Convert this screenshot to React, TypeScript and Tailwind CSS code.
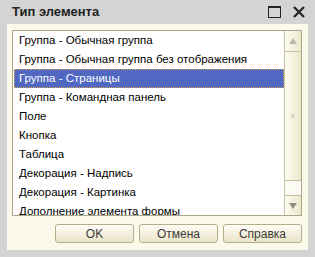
import React from "react";

const items = [
  "Группа - Обычная группа",
  "Группа - Обычная группа без отображения",
  "Группа - Страницы",
  "Группа - Командная панель",
  "Поле",
  "Кнопка",
  "Таблица",
  "Декорация - Надпись",
  "Декорация - Картинка",
  "Дополнение элемента формы",
];

function Btn({ label, w }: { label: string; w: string }) {
  return (
    <div
      className={`${w} h-[19px] rounded-[3px] border border-[#b5ae8a] bg-gradient-to-b from-[#fefdf6] to-[#ebe5c7] flex items-center justify-center text-[12px] text-[#3a3a3a] leading-none`}
    >
      {label}
    </div>
  );
}

export default function App() {
  return (
    <div
      className="w-[315px] h-[257px] bg-[#d4d4d4] flex flex-col px-[7px] pb-[7px]"
      style={{ fontFamily: '"Liberation Sans", Arial, sans-serif' }}
    >
      <div className="h-[24px] flex items-center pl-[5px] pr-[3px] shrink-0">
        <span className="font-bold text-[13px] text-[#222] flex-1">Тип элемента</span>
        <svg width="13" height="12" viewBox="0 0 13 12" className="mr-[12px]">
          <rect x="0.5" y="0.5" width="12" height="11" fill="none" stroke="#222" strokeWidth="1" />
          <rect x="0" y="0" width="13" height="2" fill="#222" />
        </svg>
        <svg width="12" height="12" viewBox="0 0 12 12">
          <path d="M1 1 L11 11 M11 1 L1 11" stroke="#222" strokeWidth="2.2" />
        </svg>
      </div>
      <div className="flex-1 bg-[#fbf9ea] pt-[6px] pl-[5px] pr-[6px] flex flex-col">
        <div className="h-[186px] border border-[#aaa68b] bg-white flex shrink-0">
          <div className="flex-1 overflow-hidden pl-[1px]">
            {items.map((t, i) =>
              i === 2 ? (
                <div
                  key={i}
                  className="h-[19px] flex items-center pl-[4px] bg-[#5068c2] text-white text-[11.5px] border border-dotted border-[#d9a648] whitespace-nowrap"
                >
                  {t}
                </div>
              ) : (
                <div
                  key={i}
                  className="h-[19px] flex items-center pl-[5px] text-[11.5px] text-black whitespace-nowrap"
                >
                  {t}
                </div>
              )
            )}
          </div>
          <div className="w-[17px] border-l border-[#c7c2a2] flex flex-col shrink-0">
            <div className="h-[21px] border-b border-[#c7c2a2] bg-gradient-to-r from-[#fdfcf2] to-[#ede7cb] flex items-center justify-center shrink-0">
              <svg width="8" height="6" viewBox="0 0 8 6">
                <path d="M4 0 L8 6 L0 6 Z" fill="#b9b7ad" />
              </svg>
            </div>
            <div className="h-[129px] border-b border-[#c7c2a2] bg-gradient-to-r from-[#fdfcf2] to-[#ede7cb] flex items-center justify-center shrink-0">
              <div className="w-[4px] h-[4px] rounded-full bg-[#d8d5c6]" />
            </div>
            <div className="h-[15px] bg-[#fcfbf3] border-b border-[#c7c2a2] shrink-0" />
            <div className="flex-1 bg-gradient-to-r from-[#fdfcf2] to-[#ede7cb] flex items-center justify-center">
              <svg width="8" height="6" viewBox="0 0 8 6">
                <path d="M0 0 L8 0 L4 6 Z" fill="#8f8d85" />
              </svg>
            </div>
          </div>
        </div>
        <div className="flex justify-end gap-[5px] mt-[8px]">
          <Btn label="OK" w="w-[79px]" />
          <Btn label="Отмена" w="w-[79px]" />
          <Btn label="Справка" w="w-[79px]" />
        </div>
      </div>
    </div>
  );
}
